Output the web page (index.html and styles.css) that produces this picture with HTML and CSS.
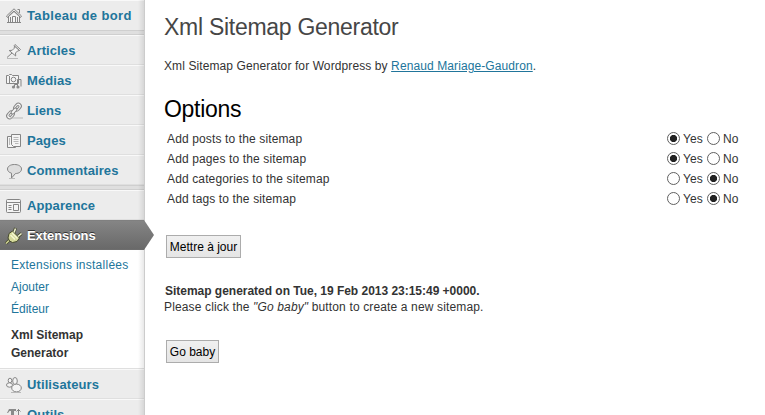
FILE: index.html
```html
<!DOCTYPE html>
<html lang="fr">
<head>
<meta charset="utf-8">
<title>Xml Sitemap Generator</title>
<link rel="stylesheet" href="styles.css">
</head>
<body>
<div class="layout">
  <nav class="menu">
    <a class="item wide"><svg class="icon" viewBox="0 0 16 16"><path class="fill" d="M2.500 8v6.500h11V8L8 3z"/><path d="M.5 8 8 .8 15.500 8 14.500 9.500 8 3.500 1.500 9.500zM11.500 1.500h2V5"/><path d="M6.500 14V8.500h3V14M4.500 9v5M11.500 9v5M1 14.500h14"/></svg><span>Tableau de bord</span></a>
    <div class="separator"></div>
    <a class="item"><svg class="icon" viewBox="0 0 16 16"><path class="fill" d="m8.500 3 5 4.500-2 .5-2 2 .2 3-6.500-5.500 3-.2 2-2z"/><path class="fill" d="m9 1.500 5.500 5-1 1-5.500-5z"/><path d="M6 10 1 14.500"/><path class="soft" d="M1 15.500h11"/></svg><span>Articles</span></a>
    <a class="item"><svg class="icon" viewBox="0 0 16 16"><path class="fill" d="M.5 2.500h2l1-1h2l1 1h6v8H.5z"/><circle cx="7.500" cy="6.500" r="2.300"/><path d="M3.500 3v7M11.500 14V6.500h3.500v7"/><path d="M8.500 14v-2.500h3"/><circle class="dot" cx="7.500" cy="14" r="1.600"/><circle class="dot" cx="12" cy="14" r="1.600"/></svg><span>Médias</span></a>
    <a class="item"><svg class="icon" viewBox="0 0 16 16"><g transform="rotate(-48 8 8)"><rect class="fill" x="-1.500" y="5" width="8.500" height="6" rx="3"/><rect class="fill" x="9" y="5" width="8.500" height="6" rx="3"/><rect x="1" y="7" width="4" height="2" rx="1"/><rect x="11" y="7" width="4" height="2" rx="1"/><rect class="fill" x="4.500" y="6.500" width="7" height="3" rx="1.500"/></g><path class="soft" d="M4 15h13"/></svg><span>Liens</span></a>
    <a class="item"><svg class="icon" viewBox="0 0 16 16"><path class="fill" d="M1.500 3.500h8v11h-8z"/><path class="fill" d="M5.500 1.500h9v12h-7l-2-2z"/><path class="soft" d="M7.500 4.500h5M7.500 6.500h5M7.500 8.500h5M9 10.500h3.500M3.500 5v7"/></svg><span>Pages</span></a>
    <a class="item"><svg class="icon" viewBox="0 0 16 16"><path class="fill bubble" d="M8.500 1.500c4 0 7 1.800 7 4.500s-2.500 4.500-6 4.500L5.500 15v-4.800C3 9.500 1.500 8 1.500 6c0-2.700 3-4.500 7-4.500z"/><path class="soft" d="M3 15.500h6"/></svg><span>Commentaires</span></a>
    <div class="separator"></div>
    <a class="item"><svg class="icon" viewBox="0 0 16 16"><rect class="fill" x=".5" y="1.500" width="14" height="13" rx="1"/><path d="M1 4.500h14M2.500 7.500h3M2.500 9.500h3M2.500 11.500h3M7.500 6.500h5v6h-5z"/></svg><span>Apparence</span></a>
    <a class="item current"><svg class="icon plug" viewBox="0 0 16 16"><path class="cord-edge" d="M4 11.500 0 15.500"/><path class="cord" d="M4 11.500 0 15.500"/><path class="prong-edge" d="M8 4.500 9.500 0M12 8.500l3.500-3"/><path d="m3.500 13-1.500-3L3 5.500 6.500 3l7 7-2.500 3.500-4.500 1z"/><path class="prong" d="M8 4.500 9.500.5M12 8.500l3.500-3"/><path class="shine" d="m6 5 5.500 5.500M4.500 7l4.500 4.500"/></svg><span>Extensions</span></a>
    <div class="submenu">
      <a class="s1">Extensions installées</a>
      <a>Ajouter</a>
      <a>Éditeur</a>
      <a class="active">Xml Sitemap<br>Generator</a>
    </div>
    <a class="item"><svg class="icon" viewBox="0 0 16 16"><ellipse class="fill" cx="4" cy="3.500" rx="1.800" ry="2.300"/><ellipse class="fill" cx="3.500" cy="8" rx="3" ry="2.200"/><ellipse class="fill" cx="9" cy="4" rx="2.300" ry="3.500"/><ellipse class="fill" cx="10.500" cy="11" rx="4.800" ry="3.900"/><path class="soft" d="M5 15.500h10"/></svg><span>Utilisateurs</span></a>
    <a class="item"><svg class="icon" viewBox="0 0 16 16"><path class="dot" d="M1 6 3 2h7v2H8v10H5V4H3.500L2 6z"/><path d="M12.500 2v13M10.500 4.500l2-2 2 2M10.500 9h4"/></svg><span>Outils</span></a>
  </nav>
  <main class="content">
    <h1>Xml Sitemap Generator</h1>
    <p class="intro">Xml Sitemap Generator for Wordpress by <a>Renaud Mariage-Gaudron</a>.</p>
    <h2>Options</h2>
    <div class="options">
      <div class="row"><span>Add posts to the sitemap</span><label><i class="radio on"></i>Yes</label><label><i class="radio"></i>No</label></div>
      <div class="row"><span>Add pages to the sitemap</span><label><i class="radio on"></i>Yes</label><label><i class="radio"></i>No</label></div>
      <div class="row"><span>Add categories to the sitemap</span><label><i class="radio"></i>Yes</label><label><i class="radio on"></i>No</label></div>
      <div class="row"><span>Add tags to the sitemap</span><label><i class="radio"></i>Yes</label><label><i class="radio on"></i>No</label></div>
    </div>
    <button class="update">Mettre à jour</button>
    <p class="status"><strong>Sitemap generated on Tue, 19 Feb 2013 23:15:49 +0000.</strong><br><span>Please click the <em>"Go baby"</em> button to create a new sitemap.</span></p>
    <button class="go">Go baby</button>
  </main>
</div>
</body>
</html>
```
FILE: styles.css
```css
* { box-sizing: border-box; }
body { margin: 0; background: #fff; color: #333; font: 12px/16px "Liberation Sans", Arial, sans-serif; overflow: hidden; }
.layout { display: flex; height: 415px; overflow: hidden; }

.menu { position: relative; flex: 0 0 145px; background: #ececec; border-right: 1px solid #ccc; }
.menu::after { content: ""; position: absolute; top: 0; right: 0; bottom: 0; width: 6px; background: linear-gradient(90deg, transparent, rgba(0,0,0,.09)); }
.item { display: flex; align-items: center; height: 30px; padding: 1px 0 0 6px; gap: 5px; border-top: 1px solid #f9f9f9; border-bottom: 1px solid #dfdfdf; color: #21759b; font-size: 13px; font-weight: bold; letter-spacing: .1px; white-space: nowrap; }
.wide { height: 31px; letter-spacing: .35px; border-bottom-color: #cfcfcf; }
.separator { height: 4px; background: #dfdfdf; border-bottom: 1px solid #cfcfcf; }
.item + .separator ~ .separator { height: 5px; border-top: 1px solid #cfcfcf; }
.icon { flex: none; width: 16px; height: 16px; fill: none; stroke: #858585; stroke-width: 1; overflow: visible; }
.icon .fill { fill: #f4f4f4; }
.icon .bubble { fill: #dedede; }
.icon .soft { stroke: #b9b9b9; }
.icon .dot { fill: #8a8a8a; stroke: none; }
.current { position: relative; z-index: 1; background: linear-gradient(#858585, #696969); border-color: #808080 transparent #6d6d6d; color: #fff; letter-spacing: -.08px; text-shadow: 0 -1px 0 #333; }
.current::after { content: ""; position: absolute; left: 144px; top: -1px; width: 10px; height: 30px; background: linear-gradient(#858585, #696969); clip-path: polygon(0 0, 100% 50%, 0 100%); }
.plug { fill: #d5d99a; stroke: #464a2e; }
.plug .cord-edge, .plug .prong-edge { stroke-width: 3; }
.plug .cord { stroke: #d5d99a; stroke-width: 1.500; }
.plug .prong { stroke: #eef0d0; stroke-width: 1.600; }
.plug .shine { stroke: #f7f8d5; stroke-width: 1.300; }
.submenu { height: 119px; padding: 4px 0 0 11px; background: #fff; border-bottom: 1px solid #dfdfdf; line-height: 22px; color: #21759b; }
.submenu a { display: block; }
.s1 { letter-spacing: .26px; }
.submenu .active { margin-top: 6px; line-height: 18px; color: #333; font-weight: bold; }

.content { flex: 1; padding: 13px 0 0 19px; }
h1, h2 { margin: 0; font-weight: normal; font-size: 23px; line-height: 28px; }
h1 { color: #464646; letter-spacing: -.28px; }
h2 { margin-top: 21px; color: #000; letter-spacing: -.3px; }
p { margin: 0; white-space: nowrap; }
.intro { margin-top: 17px; letter-spacing: .1px; }
.intro a { color: #21759b; text-decoration: underline; }
.options { margin-top: 6px; padding-left: 3px; }
.row { display: flex; align-items: center; height: 20px; letter-spacing: .13px; }
.row > span { width: 500px; }
.row label { display: flex; align-items: center; width: 40px; gap: 3px; }
.radio { flex: none; width: 13px; height: 13px; margin-bottom: 2px; border: 1px solid #606060; border-radius: 50%; background: #fff; }
.radio.on { background: radial-gradient(circle, #222 0 3.200px, #fff 4px); }
button { display: block; height: 23px; margin: 0 0 0 2px; padding: 0; border: 1px solid #acacac; background: linear-gradient(#f0f0f0, #e5e5e5); color: #000; font: 12px "Liberation Sans", Arial, sans-serif; }
.update { width: 75px; margin-top: 26px; }
.status { margin-top: 25px; }
.status strong { padding-left: 1px; letter-spacing: -.02px; }
.status span { letter-spacing: .14px; }
.go { width: 53px; margin-top: 25px; }
```
